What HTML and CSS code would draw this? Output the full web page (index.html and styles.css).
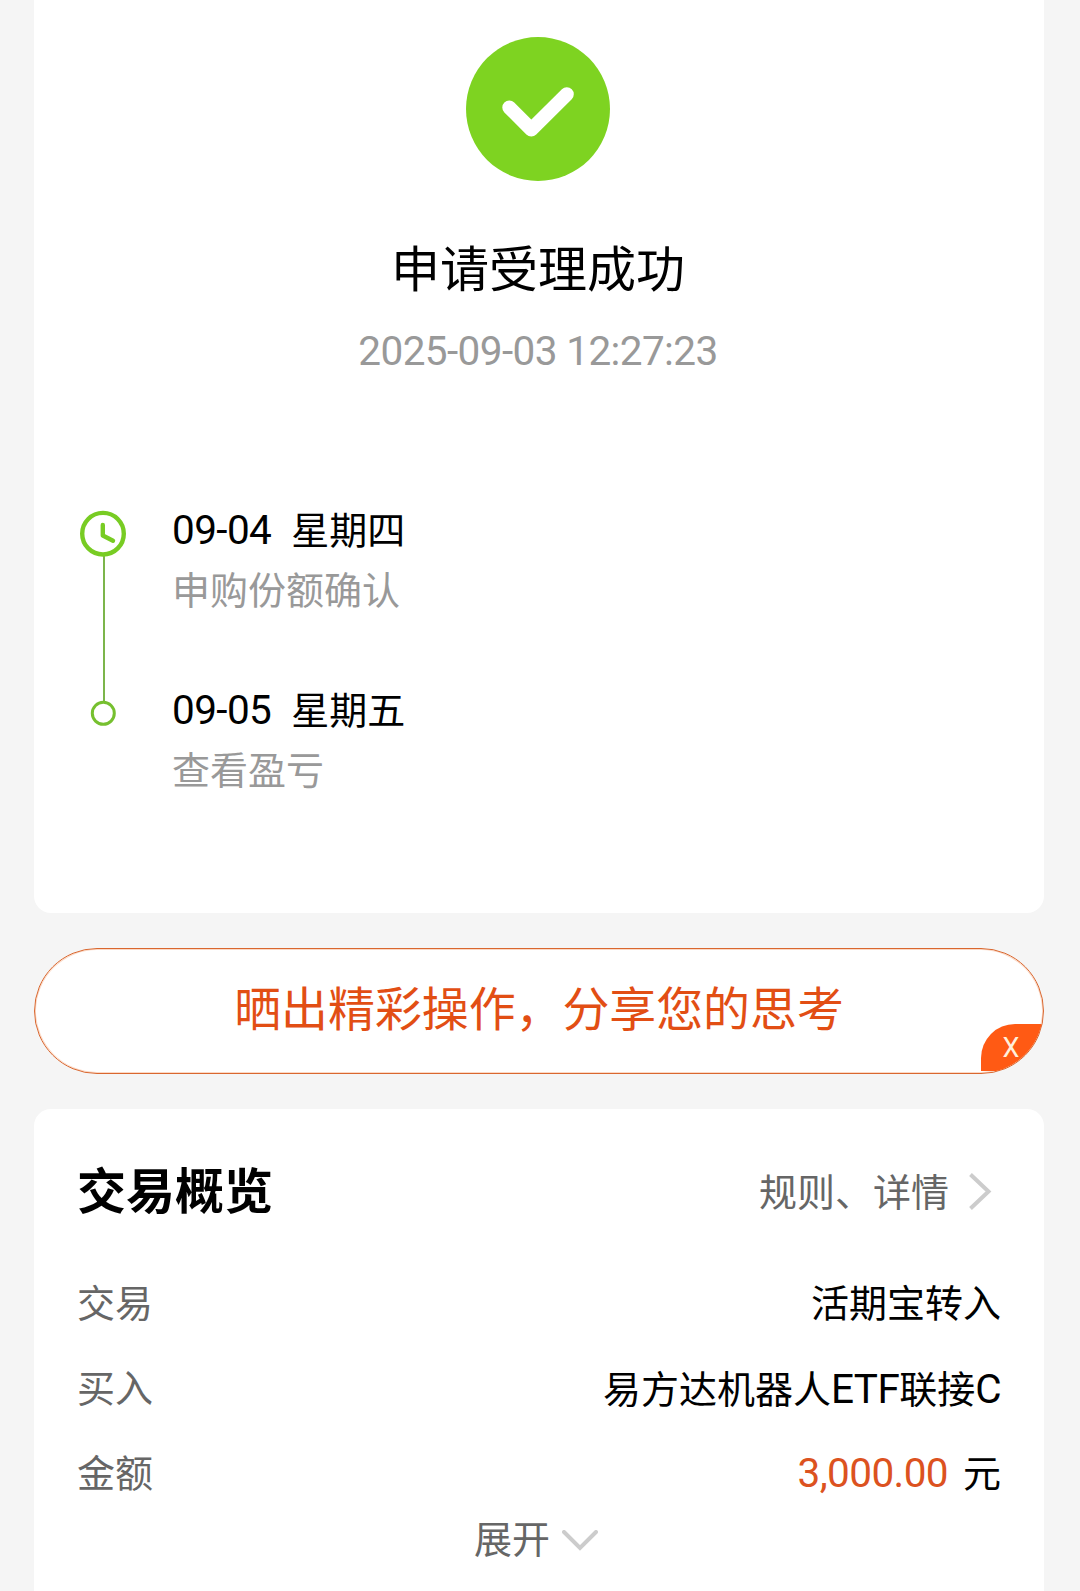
FILE: index.html
```html
<!DOCTYPE html>
<html lang="zh-CN">
<head>
    <meta charset="UTF-8">
    <title>申请受理成功</title>
    <link rel="stylesheet" href="styles.css">
</head>
<body>
<div class="card result">
    <svg class="success-icon" width="144" height="144" viewBox="0 0 144 144">
        <circle cx="72" cy="72" r="72" fill="#7ed321"/>
        <path d="M43.3 70.5 L65.3 92.5 L100.8 57.2" fill="none" stroke="#fff" stroke-width="14" stroke-linecap="round" stroke-linejoin="round"/>
    </svg>
    <h1 class="result-title">申请受理成功</h1>
    <p class="result-time">2025-09-03 12:27:23</p>
    <div class="timeline">
        <svg class="rail" width="46" height="240" viewBox="0 0 46 240" fill="none">
            <path d="M24 55V201" stroke="#7cb54b" stroke-width="2"/>
            <circle cx="23" cy="32.7" r="20.8" stroke="#78cc23" stroke-width="4.4"/>
            <path d="M22.8 24V34.5L33 39.7" stroke="#78cc23" stroke-width="4.4" stroke-linecap="round" stroke-linejoin="round"/>
            <circle cx="23.3" cy="212.3" r="11" stroke="#76c02f" stroke-width="3"/>
        </svg>
        <ul class="steps">
            <li>
                <div class="step-date"><span class="num">09-04</span><span>星期四</span></div>
                <div class="step-text">申购份额确认</div>
            </li>
            <li>
                <div class="step-date"><span class="num">09-05</span><span>星期五</span></div>
                <div class="step-text">查看盈亏</div>
            </li>
        </ul>
    </div>
</div>

<div class="share">
    <span class="share-text">晒出精彩操作，分享您的思考</span>
    <span class="share-close">X</span>
</div>

<div class="card overview">
    <div class="overview-head">
        <h2>交易概览</h2>
        <div class="more">
            <span>规则、详情</span>
            <svg width="24" height="40" viewBox="0 0 24 40" fill="none">
                <path d="M2.5 2.5L20.5 19.5L2.5 36.5" stroke="#ccc" stroke-width="4"/>
            </svg>
        </div>
    </div>
    <div class="row">
        <span class="label">交易</span>
        <span>活期宝转入</span>
    </div>
    <div class="row">
        <span class="label">买入</span>
        <span>易方达机器人<span class="num">ETF</span>联接<span class="num">C</span></span>
    </div>
    <div class="row">
        <span class="label">金额</span>
        <span class="amount"><span class="num price">3,000.00</span><span>元</span></span>
    </div>
    <div class="expand">
        <span>展开</span>
        <svg width="36" height="22" viewBox="0 0 36 22" fill="none">
            <path d="M2 2L18 18L34 2" stroke="#ccc" stroke-width="4" stroke-linecap="round"/>
        </svg>
    </div>
</div>
</body>
</html>
```
FILE: styles.css
```css
* {
    box-sizing: border-box;
    margin: 0;
    padding: 0;
}

body {
    height: 1591px;
    padding: 0 36px 0 34px;
    display: flex;
    flex-direction: column;
    overflow: hidden;
    background-color: #f5f5f5;
    color: #000;
    font-family: Roboto, "Noto Sans CJK SC", sans-serif;
    font-size: 38px;
}

svg {
    display: block;
    flex: none;
}

.num {
    font-size: 40.5px;
    letter-spacing: -0.6px;
}

.card {
    background-color: #fff;
}

.result {
    height: 913px;
    padding: 37px 48px 0 46px;
    border-radius: 0 0 17px 17px;
}

.success-icon {
    margin-left: 386px;
}

.result-title {
    margin-top: 60px;
    line-height: 60px;
    font-size: 49px;
    font-weight: 400;
    text-align: center;
}

.result-time {
    margin-top: 25px;
    line-height: 50px;
    font-size: 40.5px;
    letter-spacing: -0.6px;
    text-align: center;
    color: #999;
}

.timeline {
    display: flex;
    margin-top: 125px;
}

.steps {
    margin-left: 46px;
    list-style: none;
    line-height: 60px;
}

.steps li {
    height: 180px;
}

.step-date {
    display: flex;
    gap: 20px;
}

.step-date .num {
    line-height: 58px;
}

.step-text {
    color: #999;
}

.share {
    position: relative;
    display: flex;
    justify-content: center;
    height: 126px;
    margin: 35px 0;
    padding-top: 31px;
    border: 1px solid #d9672f;
    border-radius: 63px;
    background-color: #fff;
    box-shadow: inset 0 0 0 1px #fbd9c6;
    overflow: hidden;
}

.share-text {
    font-size: 46.9px;
    line-height: 60px;
    color: #e24e14;
}

/* close tab sits in the corner and is cut by the pill's round edge */
.share-close {
    position: absolute;
    right: 0;
    bottom: 2px;
    width: 62px;
    height: 47px;
    padding-left: 21.5px;
    border-radius: 34px 0 0 0;
    background-color: #ff5a14;
    color: #fff0dc;
    font-size: 27px;
    line-height: 49px;
}

.overview {
    flex: 1;
    padding: 54px 43px 0;
    border-radius: 17px 17px 0 0;
}

.overview-head {
    display: flex;
    justify-content: space-between;
    align-items: center;
    height: 60px;
    margin-bottom: 39px;
}

.overview-head h2 {
    font-size: 49px;
    line-height: 60px;
    font-weight: 700;
}

.more {
    display: flex;
    align-items: center;
    gap: 19px;
    padding-right: 9px;
    line-height: 60px;
    color: #666;
}

.more svg {
    margin-top: -2px;
}

.row {
    display: flex;
    justify-content: space-between;
    height: 85px;
    line-height: 84px;
}

.label {
    color: #666;
}

.amount {
    display: flex;
    gap: 15px;
}

.price {
    line-height: 82px;
    color: #dc5220;
}

.expand {
    display: flex;
    justify-content: center;
    align-items: center;
    gap: 12px;
    height: 47px;
    padding-right: 6px;
    line-height: 47px;
    color: #666;
}
```
